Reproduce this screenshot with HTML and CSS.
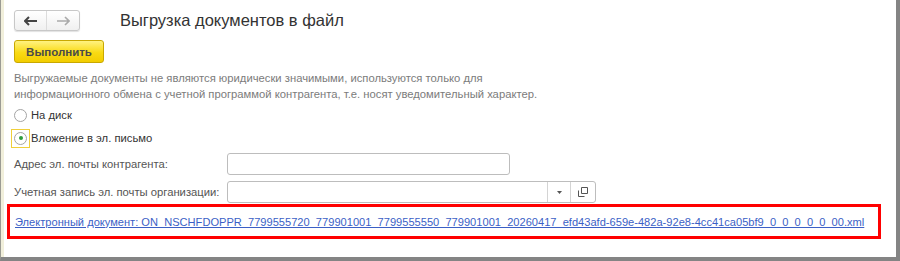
FILE: index.html
```html
<!DOCTYPE html>
<html lang="ru">
<head>
	<meta charset="UTF-8">
	<title>Выгрузка документов в файл</title>
	<link rel="stylesheet" href="styles.css">
</head>
<body>
	<div class="frame">
		<div class="form">
			<!-- шапка -->
			<div class="header">
				<div class="nav">
					<button type="button" class="nav-btn back">
						<svg width="14" height="10" viewBox="0 0 14 10"><path d="M1 5h12M5 1L1 5l4 4" fill="none" stroke="#444" stroke-width="2"/></svg>
					</button>
					<button type="button" class="nav-btn fwd">
						<svg width="14" height="10" viewBox="0 0 14 10"><path d="M1 5h12M9 1l4 4-4 4" fill="none" stroke="#aaa" stroke-width="1.6"/></svg>
					</button>
				</div>
				<h1 class="title">Выгрузка документов в файл</h1>
			</div>
			<div class="toolbar">
				<button type="button" class="btn-run">Выполнить</button>
			</div>
			<p class="note">Выгружаемые документы не являются юридически значимыми, используются только для<br>информационного обмена с учетной программой контрагента, т.е. носят уведомительный характер.</p>
			<!-- способ выгрузки -->
			<div class="radio-row">
				<span class="radio-wrap"><span class="radio"></span></span>
				<span>На диск</span>
			</div>
			<div class="radio-row">
				<span class="radio-wrap focus"><span class="radio checked"></span></span>
				<span>Вложение в эл. письмо</span>
			</div>
			<div class="field-row">
				<label class="field-label">Адрес эл. почты контрагента:</label>
				<div class="input email"></div>
			</div>
			<div class="field-row">
				<label class="field-label">Учетная запись эл. почты организации:</label>
				<div class="input combo">
					<span class="combo-text"></span>
					<span class="combo-btn">
						<svg width="5" height="3" viewBox="0 0 5 3"><path d="M0 0h5L2.5 3z" fill="#555"/></svg>
					</span>
					<span class="combo-btn open">
						<svg width="10" height="10" viewBox="0 0 10 10"><path d="M3.5 .5h6v6h-6zM.5 3.5v6h6" fill="none" stroke="#555"/></svg>
					</span>
				</div>
			</div>
			<div class="result">
				<a href="#" class="doc-link">Электронный документ: ON_NSCHFDOPPR_7799555720_779901001_7799555550_779901001_20260417_efd43afd-659e-482a-92e8-4cc41ca05bf9_0_0_0_0_0_00.xml</a>
			</div>
		</div>
	</div>
</body>
</html>
```

FILE: styles.css
```css
html,body{
	margin: 0;
	padding: 0;
	background-color: #fff;
}
body{
	font-family: "Liberation Sans", Arial, sans-serif;
	font-size: 11.25px;
	color: #333;
}
.frame{
	width: 900px;
	height: 261px;
	box-sizing: border-box;
	border-left: 1px solid #9b9b93;
	border-right: 4px solid #848484;
	border-bottom: 4px solid #848484;
	overflow: hidden;
}
.form{
	height: 100%;
	border-left: 3px solid #f1efdb;
	padding: 10px 0 0 10px;
	box-sizing: border-box;
}
.header{
	display: flex;
	align-items: center;
	height: 21px;
}
.nav{
	display: flex;
	border: 1px solid #c8c8c8;
	border-radius: 3px;
	background: linear-gradient(#fff, #f0f0f0);
	box-shadow: 0 1px 1px rgba(0,0,0,.12);
}
.nav-btn{
	width: 32px;
	height: 19px;
	border: none;
	background: none;
	padding: 0;
	display: flex;
	align-items: center;
	justify-content: center;
}
.nav-btn.back{
	border-right: 1px solid #dcdcdc;
}
.title{
	margin: 0 0 0 40px;
	font-size: 16.5px;
	font-weight: normal;
	color: #333;
}
.toolbar{
	margin-top: 9px;
}
.btn-run{
	width: 90px;
	height: 23px;
	border: 1px solid #c9a800;
	border-radius: 3px;
	background: linear-gradient(#fff280, #f9da14 55%, #f2cd00);
	font-family: inherit;
	font-size: 11.5px;
	font-weight: bold;
	color: #4a4a4a;
	padding: 0;
}
.note{
	margin: 7px 0 0;
	color: #7b7b7b;
	line-height: 16px;
}
.radio-row{
	display: flex;
	align-items: center;
	height: 20px;
	margin-top: 3px;
}
.radio-row + .radio-row{
	margin-top: 3px;
}
.radio-wrap{
	width: 19px;
	height: 19px;
	box-sizing: border-box;
	border: 1px solid transparent;
	display: flex;
	align-items: center;
	justify-content: center;
	margin-left: -3px;
	margin-right: 1px;
}
.radio-wrap.focus{
	border-color: #f0cf3a;
}
.radio{
	width: 11px;
	height: 11px;
	border: 1px solid #a4a4a4;
	border-radius: 50%;
	background: #fff;
	position: relative;
}
.radio.checked::after{
	content: "";
	position: absolute;
	left: 3.5px;
	top: 3.5px;
	width: 4px;
	height: 4px;
	border-radius: 50%;
	background: #2e9c3c;
}
.field-row{
	display: flex;
	align-items: center;
	height: 22px;
	margin-top: 5px;
}
.field-row + .field-row{
	margin-top: 6px;
}
.field-label{
	width: 213px;
	color: #555;
	white-space: nowrap;
}
.input{
	height: 22px;
	box-sizing: border-box;
	border: 1px solid #bdbdbd;
	border-radius: 3px;
	background: #fff;
}
.input.email{
	width: 283px;
}
.input.combo{
	width: 369px;
	display: flex;
}
.combo-text{
	flex: 1;
}
.combo-btn{
	width: 22px;
	display: flex;
	align-items: center;
	justify-content: center;
	border-left: 1px solid #d4d4d4;
}
.combo-btn.open{
	width: 24px;
}
.result{
	margin: 1px 0 0 -7px;
	width: 874px;
	height: 35px;
	box-sizing: border-box;
	border: 3px solid #f00;
	display: flex;
	align-items: center;
	padding-left: 5px;
}
.doc-link{
	color: #3b5fc6;
	font-size: 11.1px;
	text-decoration: underline;
	white-space: nowrap;
}
```
